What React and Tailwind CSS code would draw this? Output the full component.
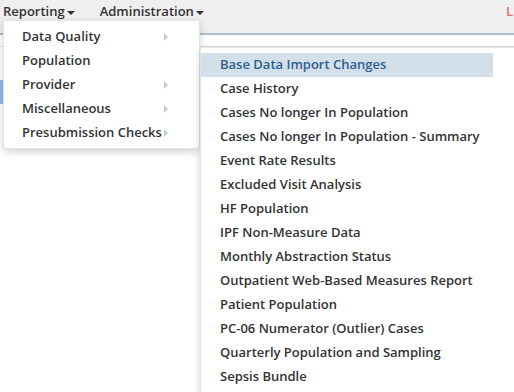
import React from "react";

const level1 = [
  { label: "Data Quality", sub: true },
  { label: "Population", sub: false },
  { label: "Provider", sub: true },
  { label: "Miscellaneous", sub: true },
  { label: "Presubmission Checks", sub: true },
];

const level2 = [
  "Base Data Import Changes",
  "Case History",
  "Cases No longer In Population",
  "Cases No longer In Population - Summary",
  "Event Rate Results",
  "Excluded Visit Analysis",
  "HF Population",
  "IPF Non-Measure Data",
  "Monthly Abstraction Status",
  "Outpatient Web-Based Measures Report",
  "Patient Population",
  "PC-06 Numerator (Outlier) Cases",
  "Quarterly Population and Sampling",
  "Sepsis Bundle",
];

const Caret = () => (
  <span className="inline-block w-0 h-0 ml-[2px] align-middle border-x-[4px] border-x-transparent border-t-[4px] border-t-[#333]" />
);

export default function App() {
  return (
    <div
      className="relative w-[514px] h-[392px] overflow-hidden bg-white text-[#333]"
      style={{ fontFamily: '"Open Sans", "Liberation Sans", sans-serif' }}
    >
      {/* Navbar */}
      <div className="h-[35px] bg-[#efefef] border-b-2 border-[#a9bfd2] flex items-start text-[13px] font-semibold whitespace-nowrap">
        <div className="pl-[3px] pt-[1px] leading-[20px]">
          Reporting
          <Caret />
        </div>
        <div className="pl-[25px] pt-[1px] leading-[20px]">
          Administration
          <Caret />
        </div>
        <div className="ml-auto pr-0 pt-[1px] leading-[20px] text-[#e86a6a] w-[8px]">L</div>
      </div>

      {/* Page body under menus */}
      <div className="h-[12px] border-b border-[#e2e2e2]" />
      <div className="flex">
        <div className="w-[3px] h-[24px] mt-[33px] bg-[#5b9bd5] opacity-70" />
      </div>

      {/* Level 1 menu */}
      <div className="absolute left-[3px] top-[20px] w-[197px] bg-white border border-[#e4e4e4] rounded-b-[4px] shadow-[0_3px_8px_rgba(0,0,0,0.18)] pt-[4px] pb-[3px] text-[13px] font-semibold whitespace-nowrap">
        {level1.map((item) => (
          <div key={item.label} className="h-[24px] flex items-center pl-[18px] relative">
            <span>{item.label}</span>
            {item.sub && (
              <span className="absolute left-[160px] top-[8px] w-0 h-0 border-y-[4px] border-y-transparent border-l-[4px] border-l-[#c8c8c8]" />
            )}
          </div>
        ))}
      </div>

      {/* Level 2 menu */}
      <div className="absolute left-[200px] top-[47px] w-[330px] h-[360px] bg-white border border-[#e4e4e4] shadow-[0_3px_8px_rgba(0,0,0,0.18)] pt-[5px] text-[13px] font-semibold whitespace-nowrap">
        {level2.map((label, i) => (
          <div
            key={label}
            className={
              i === 0
                ? "h-[24px] w-[292px] flex items-center pl-[19px] bg-[#d3e0ea] text-[#2d5f8e]"
                : "h-[24px] flex items-center pl-[19px]"
            }
          >
            {label}
          </div>
        ))}
      </div>
    </div>
  );
}
